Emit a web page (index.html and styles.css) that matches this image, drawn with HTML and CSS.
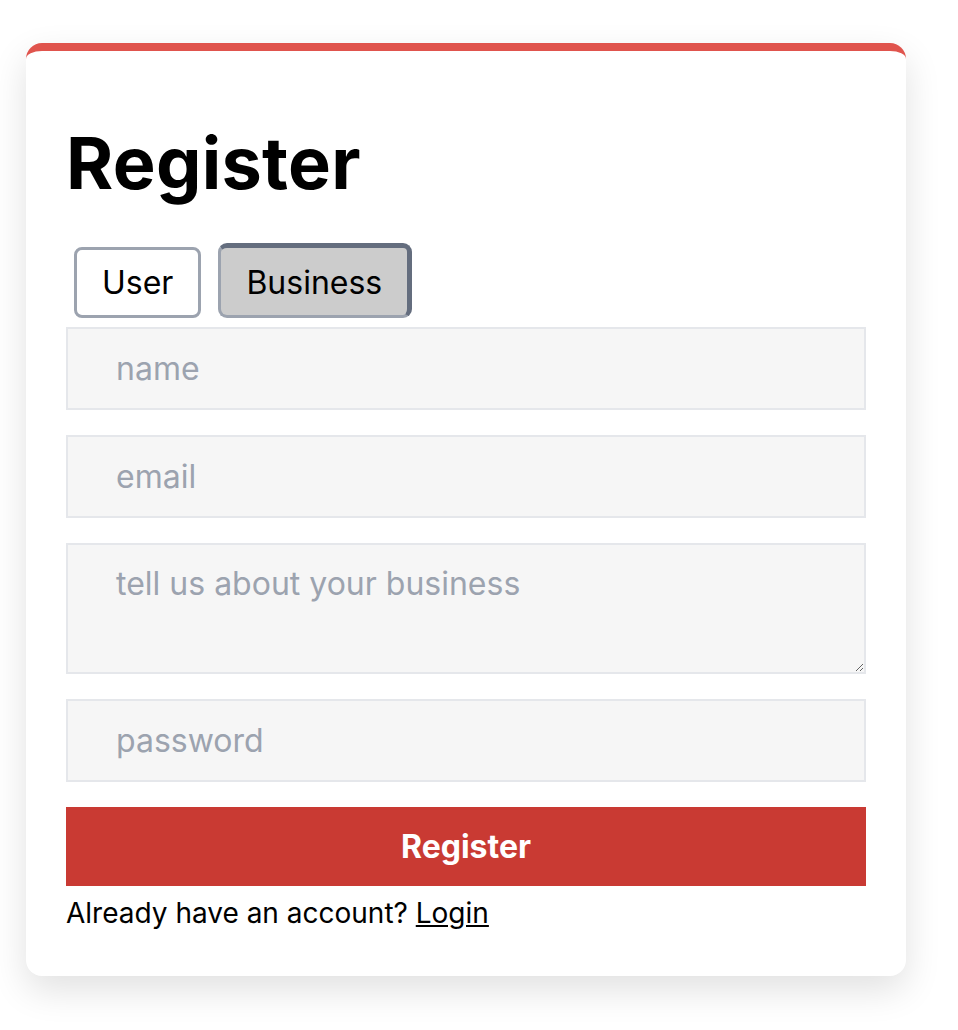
FILE: index.html
```html
<!DOCTYPE html>
<html lang="en">
<head>
<meta charset="utf-8">
<title>Register</title>
<link rel="stylesheet" href="styles.css">
</head>
<body>
<main class="card">
  <h1 class="title">Register</h1>
  <div class="tabs">
    <button class="tab" type="button">User</button>
    <button class="tab tab-active" type="button">Business</button>
  </div>
  <form class="form">
    <input class="field" type="text" placeholder="name">
    <input class="field" type="email" placeholder="email">
    <textarea class="field field-area" placeholder="tell us about your business"></textarea>
    <input class="field" type="password" placeholder="password">
    <button class="submit" type="button">Register</button>
  </form>
  <p class="footer">Already have an account? <a class="login" href="#">Login</a></p>
</main>
</body>
</html>
```
FILE: styles.css
```css
html, body {
  margin: 0;
  padding: 0;
  background: #ffffff;
}
body {
  font-family: Inter, "Noto Sans", sans-serif;
  padding: 43px 0 56px 26px;
  min-height: 1030px;
  box-sizing: border-box;
}
.card {
  box-sizing: border-box;
  width: 880px;
  background: #fff;
  border-top: 8px solid #e0544d;
  border-radius: 16px;
  box-shadow: 0 14px 36px rgba(0, 0, 0, 0.12);
  padding: 40px 40px 46px;
}
.title {
  margin: 29px 0 37px;
  font-size: 72px;
  line-height: 86px;
  font-weight: 700;
  color: #000;
  letter-spacing: 0.3px;
}
.tabs {
  display: flex;
  align-items: flex-end;
  gap: 17px;
  padding-left: 8px;
}
.tab {
  font-family: inherit;
  font-size: 32px;
  color: #000;
  background: #fff;
  border: 3px solid #9ca3af;
  border-radius: 8px;
  height: 71px;
  padding: 0 25px;
}
.tab-active {
  background: #cccccc;
  height: 75px;
  border-width: 5px 5px 3px 3px;
  border-color: #646d7e #646d7e #9ca3af #9ca3af;
  border-radius: 9px;
  padding: 2px 25px 0 25px;
}
.form {
  display: flex;
  flex-direction: column;
  gap: 25px;
  margin-top: 9px;
}
.field {
  box-sizing: border-box;
  display: block;
  width: 100%;
  height: 83px;
  margin: 0;
  background: #f6f6f6;
  border: 2px solid #e5e7eb;
  border-radius: 0;
  padding: 0 48px;
  font-family: inherit;
  font-size: 32px;
  color: #111;
}
.field::placeholder {
  color: #9ca3af;
}
.field-area {
  height: 131px;
  padding-top: 19px;
  padding-bottom: 19px;
  resize: vertical;
}
.submit {
  height: 79px;
  border: none;
  background: #c93a33;
  color: #fff;
  font-family: inherit;
  font-size: 32px;
  font-weight: 700;
  cursor: pointer;
}
.footer {
  margin: 10px 0 0;
  font-size: 28px;
  line-height: 34px;
  color: #000;
}
.login {
  color: #000;
  text-decoration: underline;
}
```
